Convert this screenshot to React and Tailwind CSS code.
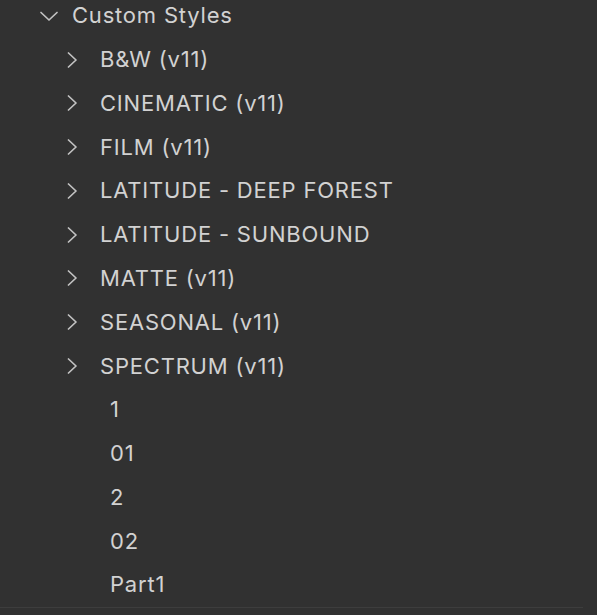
import React from "react";

const folders = [
  "B&W (v11)",
  "CINEMATIC (v11)",
  "FILM (v11)",
  "LATITUDE - DEEP FOREST",
  "LATITUDE - SUNBOUND",
  "MATTE (v11)",
  "SEASONAL (v11)",
  "SPECTRUM (v11)",
];

const presets = ["1", "01", "2", "02", "Part1"];

function ChevronRight() {
  return (
    <svg width="12" height="16" viewBox="0 0 12 16" className="shrink-0">
      <path
        d="M2.5 1 L10 8 L2.5 15"
        fill="none"
        stroke="#c2c2c2"
        strokeWidth="1.7"
        strokeLinecap="round"
        strokeLinejoin="round"
      />
    </svg>
  );
}

function ChevronDown() {
  return (
    <svg width="20" height="12" viewBox="0 0 20 12" className="shrink-0">
      <path
        d="M2 2.5 L10 10 L18 2.5"
        fill="none"
        stroke="#c2c2c2"
        strokeWidth="1.7"
        strokeLinecap="round"
        strokeLinejoin="round"
      />
    </svg>
  );
}

export default function App() {
  return (
    <div
      className="h-[615px] w-[597px] overflow-hidden bg-[#313131] text-[22px] tracking-[0.8px] text-[#d2d2d2]"
      style={{ fontFamily: "Inter, 'Noto Sans', sans-serif" }}
    >
      <div className="-mt-[6px] flex flex-col">
        <div className="flex h-[43.77px] items-center pl-[39px]">
          <ChevronDown />
          <span className="ml-[13px]">Custom Styles</span>
        </div>
        {folders.map((name) => (
          <div key={name} className="flex h-[43.77px] items-center pl-[66px]">
            <ChevronRight />
            <span className="ml-[22px]">{name}</span>
          </div>
        ))}
        {presets.map((name) => (
          <div key={name} className="flex h-[43.77px] items-center pl-[110px]">
            <span>{name}</span>
          </div>
        ))}
      </div>
      <div className="h-px w-[583px] bg-[#3d3d3d]" />
    </div>
  );
}
